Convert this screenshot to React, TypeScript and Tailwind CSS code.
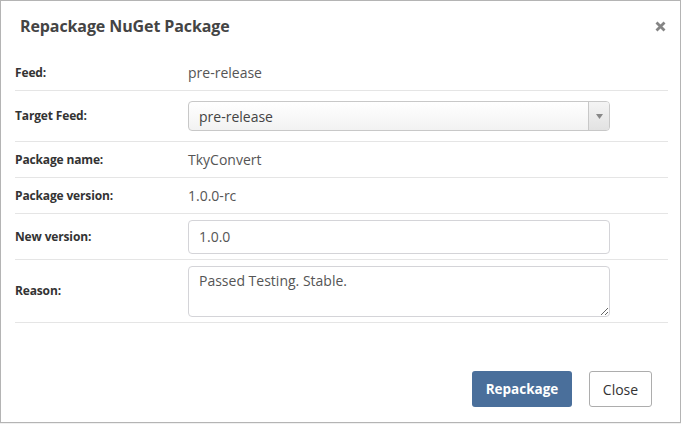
const font = { fontFamily: '"Open Sans", "Noto Sans", Arial, sans-serif' };

function Row({ label, height, children }: { label: string; height: string; children: React.ReactNode }) {
  return (
    <div className={`flex items-center border-b border-[#e5e5e5] ${height}`}>
      <div className="w-[173px] shrink-0 text-[12px] font-bold text-[#333] tracking-[-0.15px]">{label}</div>
      <div className="flex-1 text-[14px] text-[#555]">{children}</div>
    </div>
  );
}

export default function App() {
  return (
    <div className="min-h-screen bg-[#f0f0f0]">
      <div
        className="w-[681px] h-[423px] bg-white border border-[#b4b4b4] flex flex-col"
        style={font}
      >
        {/* header */}
        <div className="h-[54px] flex items-center justify-between pl-[19px] pr-[14px] pb-[4px]">
          <h1 className="text-[16px] font-bold text-[#444] tracking-[-0.1px]">Repackage NuGet Package</h1>
          <button className="w-[12px] h-[12px] flex items-center justify-center text-[#858585]">
            <svg width="11" height="11" viewBox="0 0 11 11">
              <path d="M1.5 1.5 L9.5 9.5 M9.5 1.5 L1.5 9.5" stroke="currentColor" strokeWidth="2.8" />
            </svg>
          </button>
        </div>

        {/* form rows */}
        <div className="ml-[14px] mr-[12px]">
          <Row label="Feed:" height="h-[36px]">pre-release</Row>
          <Row label="Target Feed:" height="h-[51px]">
            <div className="w-[422px] h-[30px] flex items-stretch rounded-[4px] border border-[#c8c8c8] bg-gradient-to-b from-white to-[#f2f2f2] overflow-hidden">
              <div className="flex-1 flex items-center pl-[10px] text-[14px] text-[#444]">pre-release</div>
              <div className="w-[21px] border-l border-[#c8c8c8] bg-gradient-to-b from-[#f4f4f4] to-[#e2e2e2] flex items-center justify-center">
                <svg width="7" height="5" viewBox="0 0 7 5">
                  <path d="M0 0 L7 0 L3.5 5 Z" fill="#888" />
                </svg>
              </div>
            </div>
          </Row>
          <Row label="Package name:" height="h-[36px]">TkyConvert</Row>
          <Row label="Package version:" height="h-[36px]">1.0.0-rc</Row>
          <Row label="New version:" height="h-[46px]">
            <input
              readOnly
              value="1.0.0"
              className="w-[422px] h-[34px] rounded-[4px] border border-[#d4d4d8] px-[10px] text-[14px] text-[#555] outline-none"
              style={font}
            />
          </Row>
          <Row label="Reason:" height="h-[63px]">
            <textarea
              readOnly
              value="Passed Testing. Stable."
              className="block w-[422px] h-[51px] rounded-[4px] border border-[#d4d4d8] px-[10px] py-[4px] text-[14px] text-[#555] outline-none leading-[20px]"
              style={font}
            />
          </Row>
        </div>

        {/* footer */}
        <div className="flex-1 flex items-end justify-end gap-[17px] pr-[28px] pb-[15px]">
          <button className="w-[100px] h-[36px] rounded-[3px] bg-[#4a6f9b] text-white text-[13.5px] font-bold">
            Repackage
          </button>
          <button className="w-[63px] h-[36px] rounded-[3px] bg-white border border-[#adadad] text-[#333] text-[14px]">
            Close
          </button>
        </div>
      </div>
    </div>
  );
}
